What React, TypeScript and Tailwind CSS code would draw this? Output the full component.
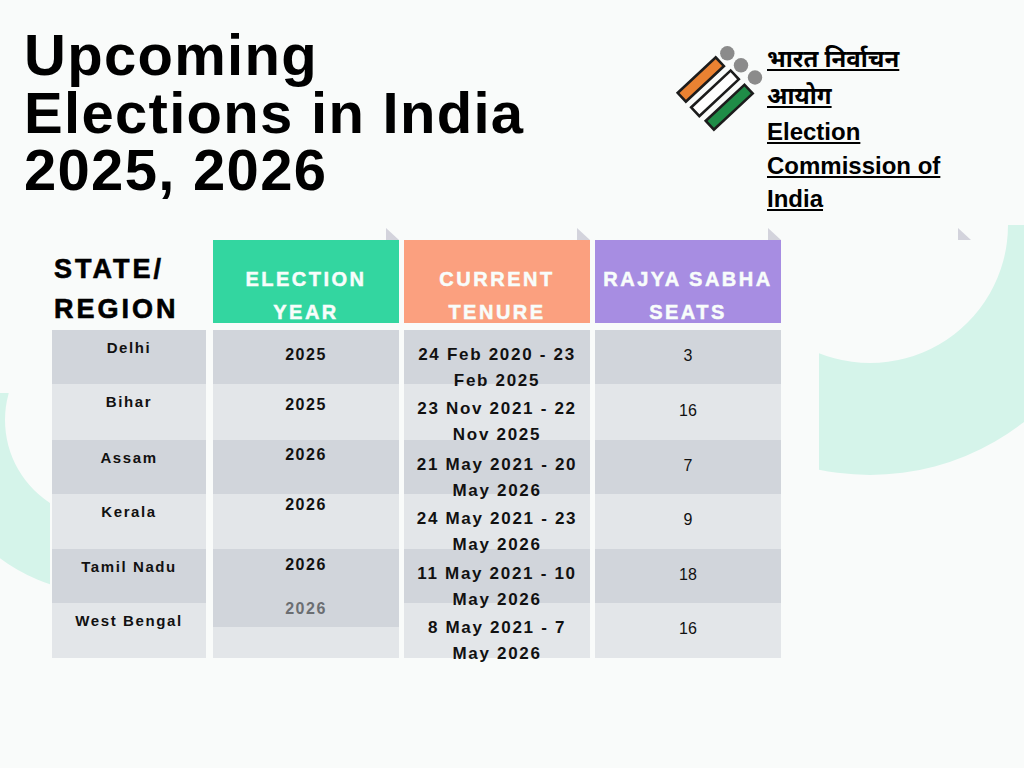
import React from 'react'

const font = { fontFamily: '"Liberation Sans", Arial, sans-serif' }
const hindi = { fontFamily: '"Noto Sans Devanagari", "Noto Sans", "Liberation Sans", sans-serif' }

const states = ['Delhi', 'Bihar', 'Assam', 'Kerala', 'Tamil Nadu', 'West Bengal']
const rowHeights = ['h-[54px]', 'h-[56px]', 'h-[54px]', 'h-[55px]', 'h-[54px]', 'h-[55px]']
const tenures = [
    ['24 Feb 2020 - 23', 'Feb 2025'],
    ['23 Nov 2021 - 22', 'Nov 2025'],
    ['21 May 2021 - 20', 'May 2026'],
    ['24 May 2021 - 23', 'May 2026'],
    ['11 May 2021 - 10', 'May 2026'],
    ['8 May 2021 - 7', 'May 2026'],
]
const seats = ['3', '16', '7', '9', '18', '16']

function Fold() {
    return (
        <svg width="13" height="12" viewBox="0 0 13 12" className="block">
            <polygon points="0,0 0,12 13,12" fill="#d3d3dc" />
        </svg>
    )
}

function rowBg(i: number) {
    return i % 2 === 0 ? 'bg-[#d1d5db]' : 'bg-[#e3e6e9]'
}

function Logo() {
    return (
        <svg width="95" height="100" viewBox="0 0 95 100" className="block">
            <circle cx="57.3" cy="13.3" r="7.2" fill="#8b8b8b" />
            <circle cx="71" cy="25.3" r="7.2" fill="#8b8b8b" />
            <circle cx="85" cy="37.5" r="7.2" fill="#8b8b8b" />
            <rect x="-26" y="-6" width="52" height="12" transform="translate(30.8 39.5) rotate(-43)" fill="#ea8232" stroke="#1c1c1c" strokeWidth="2.6" />
            <rect x="-27" y="-6" width="54" height="12" transform="translate(45 53.3) rotate(-43)" fill="#ffffff" stroke="#1c1c1c" strokeWidth="2.6" />
            <rect x="-26.5" y="-6" width="53" height="12" transform="translate(59.2 67.2) rotate(-43)" fill="#1f8c47" stroke="#1c1c1c" strokeWidth="2.6" />
        </svg>
    )
}

function Backdrop() {
    return (
        <svg width="1024" height="768" viewBox="0 0 1024 768" className="absolute inset-0">
            <defs>
                <clipPath id="clipRight">
                    <rect x="819" y="225" width="260" height="560" />
                </clipPath>
                <clipPath id="clipLeft">
                    <rect x="-10" y="393" width="60" height="300" />
                </clipPath>
            </defs>
            <path
                clipPath="url(#clipRight)"
                fillRule="evenodd"
                fill="#d5f4ea"
                d="M870 -25 a250 250 0 1 0 0.01 0 Z M870 87 a138 138 0 1 0 0.01 0 Z"
            />
            <path
                clipPath="url(#clipLeft)"
                fillRule="evenodd"
                fill="#d5f4ea"
                d="M104 247 a173 173 0 1 0 0.01 0 Z M104 321 a99 99 0 1 0 0.01 0 Z"
            />
        </svg>
    )
}

function HeaderCell({ bg, lines }: { bg: string; lines: string[] }) {
    return (
        <div className={`h-[83px] ${bg} pt-[23px] text-center text-[20px] leading-[33px] font-bold tracking-[2.5px] text-[#f8fdfb] [-webkit-text-stroke:0.5px_#f8fdfb]`}>
            {lines.map((l) => (
                <div key={l} className="whitespace-nowrap">{l}</div>
            ))}
        </div>
    )
}

export default function App() {
    return (
        <div className="relative w-[1024px] h-[768px] overflow-hidden bg-[#f9fbfa] text-[#111]" style={font}>
            <Backdrop />

            <div className="relative flex flex-col">
                {/* top: title + logo */}
                <div className="flex h-[228px]">
                    <h1 className="w-[670px] shrink-0 pl-[24px] pt-[26px] text-[58px] leading-[57.5px] font-bold tracking-[1.3px] text-black">
                        Upcoming
                        <br />
                        Elections in India
                        <br />
                        2025, 2026
                    </h1>
                    <div className="mt-[40px] shrink-0">
                        <Logo />
                    </div>
                    <div className="ml-[2px] mt-[42px] text-[24px] leading-[33.5px] font-bold text-black">
                        <div><span className="underline" style={hindi}>भारत निर्वाचन</span></div>
                        <div><span className="underline" style={hindi}>आयोग</span></div>
                        <div><span className="underline">Election</span></div>
                        <div><span className="underline">Commission of</span></div>
                        <div><span className="underline">India</span></div>
                    </div>
                </div>

                {/* table */}
                <div className="flex pl-[52px]">
                    {/* state column */}
                    <div className="w-[154px] flex flex-col">
                        <div className="h-[12px]" />
                        <div className="h-[83px] pl-[2px] pt-[9px] text-[27px] leading-[40px] font-bold tracking-[3px] text-black [-webkit-text-stroke:0.6px_black]">
                            <div>STATE/</div>
                            <div>REGION</div>
                        </div>
                        <div className="mt-[7px]">
                            {states.map((s, i) => (
                                <div key={s} className={`${rowHeights[i]} ${rowBg(i)} pt-[8px] text-center text-[15px] leading-[20px] font-bold tracking-[1.6px]`}>
                                    {s}
                                </div>
                            ))}
                        </div>
                    </div>

                    {/* election year column */}
                    <div className="ml-[7px] w-[186px] flex flex-col">
                        <div className="h-[12px] flex justify-end"><Fold /></div>
                        <HeaderCell bg="bg-[#33d6a0]" lines={['ELECTION', 'YEAR']} />
                        <div className="mt-[7px] text-center text-[16px] leading-[20px] font-bold tracking-[1.5px]">
                            <div className="h-[54px] bg-[#d1d5db] pt-[14.5px]">2025</div>
                            <div className="h-[56px] bg-[#e3e6e9] pt-[10.5px]">2025</div>
                            <div className="h-[54px] bg-[#d1d5db] pt-[5px]">2026</div>
                            <div className="h-[55px] bg-[#e3e6e9] pt-[1px]">2026</div>
                            <div className="h-[78px] bg-[#d1d5db] pt-[6px]">
                                <div>2026</div>
                                <div className="mt-[23.5px] text-[#6b6e72]">2026</div>
                            </div>
                            <div className="h-[31px] bg-[#e3e6e9]" />
                        </div>
                    </div>

                    {/* tenure column */}
                    <div className="ml-[5px] w-[186px] flex flex-col">
                        <div className="h-[12px] flex justify-end"><Fold /></div>
                        <HeaderCell bg="bg-[#fba07f]" lines={['CURRENT', 'TENURE']} />
                        <div className="mt-[7px]">
                            {tenures.map((t, i) => (
                                <div key={t[0]} className={`${rowHeights[i]} ${rowBg(i)} pt-[12px] text-center text-[17px] leading-[26px] font-bold tracking-[1.7px] whitespace-nowrap`}>
                                    <div>{t[0]}</div>
                                    <div>{t[1]}</div>
                                </div>
                            ))}
                        </div>
                    </div>

                    {/* seats column */}
                    <div className="ml-[5px] w-[186px] flex flex-col">
                        <div className="h-[12px] flex justify-end"><Fold /></div>
                        <HeaderCell bg="bg-[#a78de2]" lines={['RAJYA SABHA', 'SEATS']} />
                        <div className="mt-[7px]">
                            {seats.map((n, i) => (
                                <div key={i} className={`${rowHeights[i]} ${rowBg(i)} flex items-center justify-center pb-[3px] text-[16px] leading-[20px]`}>
                                    {n}
                                </div>
                            ))}
                        </div>
                    </div>

                    {/* stray fold */}
                    <div className="ml-[177px] h-[12px]"><Fold /></div>
                </div>
            </div>
        </div>
    )
}
